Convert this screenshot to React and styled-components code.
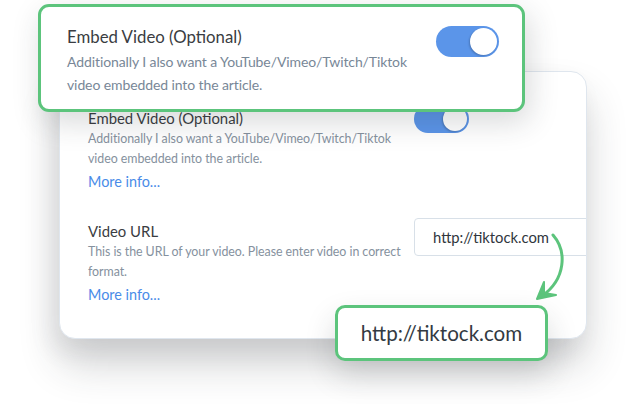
import React from "react";
import styled, { createGlobalStyle } from "styled-components";

const Global = createGlobalStyle`
  html, body { margin: 0; padding: 0; background: #ffffff; }
  body { font-family: Lato, "Open Sans", sans-serif; -webkit-font-smoothing: antialiased; }
`;

const GREEN = "#5cc47c";
const BLUE = "#5b95e9";

const Stage = styled.div`
  position: relative;
  width: 626px;
  height: 410px;
  overflow: hidden;
  padding: 71px 0 0 59px;
  box-sizing: border-box;
`;

const Card = styled.div`
  width: 528px;
  height: 268px;
  box-sizing: border-box;
  background: #fff;
  border: 1px solid #dfe6ee;
  border-radius: 16px;
  box-shadow: 0 26px 40px rgba(40, 44, 52, 0.2), -8px 12px 24px rgba(40, 44, 52, 0.08);
  overflow: hidden;
  padding: 36px 0 0 28px;
  display: flex;
  flex-direction: column;
  gap: 29px;
`;

const Row = styled.div`
  display: grid;
  grid-template-columns: 326px 1fr;
`;

const TextCol = styled.div`
  display: flex;
  flex-direction: column;
  white-space: nowrap;
`;

const Title = styled.div`
  font-size: ${(p) => (p.$big ? "16.8px" : "14.9px")};
  line-height: ${(p) => (p.$big ? "24px" : "20px")};
  color: #3a3d42;
`;

const Desc = styled.div`
  font-size: ${(p) => (p.$big ? "14px" : "12.4px")};
  letter-spacing: ${(p) => (p.$big ? "-0.1px" : "-0.05px")};
  line-height: ${(p) => (p.$big ? "23px" : "20px")};
  color: ${(p) => (p.$big ? "#788797" : "#85919e")};
  margin-top: 1px;
`;

const Link = styled.div`
  font-size: 14.4px;
  line-height: 20px;
  color: #4a8ce8;
  margin-top: 3px;
`;

const Control = styled.div`
  margin-top: -3px;
`;

const Toggle = styled.div`
  width: ${(p) => p.$w}px;
  height: ${(p) => p.$h}px;
  border-radius: ${(p) => p.$h / 2}px;
  background: ${BLUE};
  position: relative;
  box-sizing: border-box;
  &::after {
    content: "";
    position: absolute;
    right: 2px;
    top: 2px;
    width: ${(p) => p.$h - 4}px;
    height: ${(p) => p.$h - 4}px;
    border-radius: 50%;
    background: #fff;
    box-shadow: -1px 1px 2px rgba(0, 0, 0, 0.2);
  }
`;

const Input = styled.div`
  width: 220px;
  height: 38px;
  box-sizing: border-box;
  border: 1px solid #d8e0e8;
  border-radius: 4px;
  padding-left: 18px;
  display: flex;
  align-items: center;
  font-size: 14.8px;
  color: #30363d;
`;

const Callout = styled.div`
  position: absolute;
  left: 38px;
  top: 4px;
  width: 487px;
  height: 108px;
  box-sizing: border-box;
  background: #fff;
  border: 3px solid ${GREEN};
  border-radius: 11px;
  box-shadow: 4px 10px 30px rgba(40, 44, 52, 0.18);
  padding: 18px 23px 0 26px;
  display: flex;
  justify-content: space-between;
  align-items: flex-start;
`;

const CalloutText = styled.div`
  display: flex;
  flex-direction: column;
  white-space: nowrap;
`;

const CalloutToggle = styled.div`
  margin-top: 1px;
`;

const UrlCallout = styled.div`
  position: absolute;
  left: 335px;
  top: 305px;
  width: 213px;
  height: 56px;
  box-sizing: border-box;
  background: #fff;
  border: 3px solid ${GREEN};
  border-radius: 10px;
  box-shadow: 0 14px 30px rgba(40, 44, 52, 0.18);
  display: flex;
  align-items: center;
  justify-content: center;
  font-size: 20.6px;
  color: #333a42;
`;

const Arrow = styled.svg`
  position: absolute;
  left: 520px;
  top: 225px;
`;

export default function App() {
  return (
    <>
      <Global />
      <Stage>
        <Card>
          <Row>
            <TextCol>
              <Title>Embed Video (Optional)</Title>
              <Desc>
                Additionally I also want a YouTube/Vimeo/Twitch/Tiktok
                <br />
                video embedded into the article.
              </Desc>
              <Link>More info...</Link>
            </TextCol>
            <Control>
              <Toggle $w={55} $h={28} />
            </Control>
          </Row>
          <Row>
            <TextCol>
              <Title>Video URL</Title>
              <Desc>
                This is the URL of your video. Please enter video in correct
                <br />
                format.
              </Desc>
              <Link>More info...</Link>
            </TextCol>
            <Control>
              <Input>http://tiktock.com</Input>
            </Control>
          </Row>
        </Card>

        <Callout>
          <CalloutText>
            <Title $big>Embed Video (Optional)</Title>
            <Desc $big>
              Additionally I also want a YouTube/Vimeo/Twitch/Tiktok
              <br />
              video embedded into the article.
            </Desc>
          </CalloutText>
          <CalloutToggle>
            <Toggle $w={63} $h={31} />
          </CalloutToggle>
        </Callout>

        <Arrow width="60" height="90" viewBox="0 0 60 90">
          <path
            d="M33 10 C 47 26, 46 54, 22 71"
            fill="none"
            stroke={GREEN}
            strokeWidth="3"
            strokeLinecap="round"
          />
          <path
            d="M17 74 L 24 57 L 24 68 L 36 70 Z"
            fill={GREEN}
            stroke={GREEN}
            strokeWidth="2"
            strokeLinejoin="round"
          />
        </Arrow>

        <UrlCallout>http://tiktock.com</UrlCallout>
      </Stage>
    </>
  );
}
